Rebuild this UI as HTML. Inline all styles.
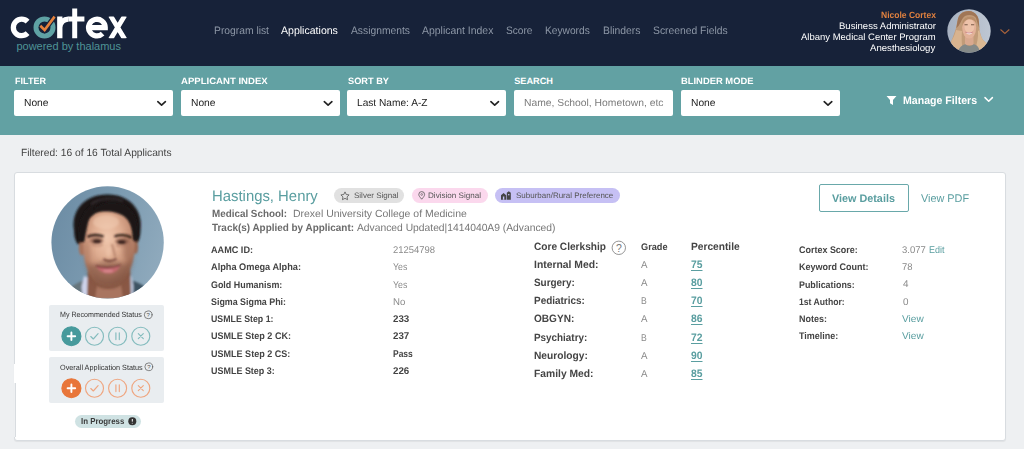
<!DOCTYPE html>
<html><head><meta charset="utf-8">
<style>
*{box-sizing:border-box;margin:0;padding:0}
html,body{width:1024px;height:449px;overflow:hidden}
body{font-family:"Liberation Sans",sans-serif;background:#eef0f2;position:relative}
.t{position:absolute;white-space:nowrap;transform-origin:0 50%;text-rendering:geometricPrecision}
.a{position:absolute}
.sel{position:absolute;top:90px;height:26px;width:159px;background:#fff;border-radius:2px}
.sb{position:absolute;left:48.5px;width:115px;height:46px;background:#e9edf0;border-radius:2px}
.pill{position:absolute;top:188px;height:15px;border-radius:7.5px}
</style></head><body>
<div class="a" style="left:0;top:0;width:1024px;height:66px;background:#172239"></div>
<div class="a" style="left:0;top:66px;width:1024px;height:68.5px;background:#62a1a3"></div>

<!-- logo -->
<svg class="a" style="left:0;top:0" width="140" height="66" viewBox="0 0 140 66">
  <defs><clipPath id="cx"><rect x="100" y="16.4" width="40" height="21.9"/></clipPath></defs><g fill="none" stroke="#fff" stroke-width="5.3">
    <path d="M27.6 21.6A8.3 8.3 0 1 0 27.6 33.2"/>
    <path d="M59.8 16.6V38.3M59.8 27.5a8.4 8.4 0 0 1 9-8.3"/>
    <path d="M74.7 8.6V38.3M68.8 18.9H84.4" stroke-width="5"/>
    <path d="M87.5 27.6H105.2A8.3 8.3 0 1 0 102.6 33.6" />
    <path d="M110.5 15.6L124.8 39.3M124.8 15.6L110.5 39.3" stroke-width="4.8" clip-path="url(#cx)"/>
  </g>
  <circle cx="44.5" cy="27.4" r="8.5" fill="none" stroke="#5fa2a4" stroke-width="5"/>
  <path d="M40.3 25.8L44.6 30 54.6 16.6" fill="none" stroke="#172239" stroke-width="5"/>
  <path d="M40.3 25.8L44.6 30 54.6 16.6" fill="none" stroke="#e5813c" stroke-width="2.6"/>
  <text x="16.4" y="50.3" font-family="Liberation Sans, sans-serif" font-size="10.5" fill="#4f9496" textLength="104.6" lengthAdjust="spacingAndGlyphs">powered by thalamus</text>
</svg>

<!-- nav avatar -->
<svg class="a" style="left:947px;top:8.5px" width="44" height="44" viewBox="0 0 44 44">
  <defs><clipPath id="ca"><circle cx="22" cy="22" r="21.7"/></clipPath>
  <linearGradient id="ab" x1="0" y1="0" x2="1" y2="0"><stop offset="0" stop-color="#a7b1c0"/><stop offset="1" stop-color="#bec7d3"/></linearGradient>
  <filter id="b1" x="-20%" y="-20%" width="140%" height="140%"><feGaussianBlur stdDeviation="0.7"/></filter></defs>
  <g clip-path="url(#ca)">
    <rect width="44" height="44" fill="url(#ab)"/>
    <g filter="url(#b1)">
      <path d="M22 2C15 2 11.500 6 10.700 11C9.500 16 9 20 7.700 23C6.500 27 5 30 4 33C5 37 7 39 8.500 41L34 41C36 39 38.500 36 39.600 34C37 32 35.500 31 34.800 29C33 25 32.800 22 32.400 19.600C32 14 32 10 30 7C28 3.500 25 2 22 2Z" fill="#c29c79"/>
      <path d="M22 2C15 2 11.500 6 10.700 11C10 14 9.800 17 9.300 19C13 17 14 10 18 7C22 5 27 6 29 9C30 12 31 16 32.300 19C32 13 32 9 30 6.500C28 3.500 25 2 22 2Z" fill="#a07657"/>
      <path d="M9 21C8 26 5.500 30 4 33C5.500 37 7.500 39.500 9 41L16 41C14.500 36 14.500 28 15 22Z" fill="#d8b38f"/>
      <path d="M31 22C31.500 28 30 35 28 41L34 41C36.500 38.500 38.500 36 39.600 34C36 31.500 35 30 34 27C33 25 32.800 23 32.500 21Z" fill="#dab893"/>
      <rect x="18" y="26" width="8.500" height="10" fill="#d9a98f"/>
      <ellipse cx="22.200" cy="18.600" rx="7" ry="11" fill="#e2b198"/>
      <ellipse cx="22.400" cy="17" rx="5" ry="7" fill="#edc2a9"/>
      <path d="M15.500 13C17 8 22 6.500 26 8C28 9 29 11 29.300 14C27 11 24 9.500 20.500 10.500C18 11.500 16.500 13.500 15.300 17Z" fill="#b88e6a"/>
      <path d="M10.500 44C11.500 38.500 15.500 35.800 18.500 35.200C21 37.500 24 37.500 26.500 35.200C30 35.800 32.500 38.500 33 44Z" fill="#858a88"/>
      <path d="M17.500 15.800h3.200M24 15.800h3.200" stroke="#7a5a4a" stroke-width="1.100"/>
      <path d="M18.600 23.300C20.500 26.200 24 26.200 25.500 23.300Z" fill="#f7ece8"/>
      <path d="M18.300 23.200C20.500 24.200 23.500 24.200 25.800 23.100" stroke="#c7757a" stroke-width=".8" fill="none"/>
    </g>
  </g>
</svg>
<svg class="a" style="left:999px;top:27.5px" width="12" height="8"><path d="M1.5 1.5l4.4 4 4.4-4" fill="none" stroke="#a9633b" stroke-width="1.1"/></svg>

<!-- selects -->
<div class="sel" style="left:14.3px"></div>
<div class="sel" style="left:180.8px"></div>
<div class="sel" style="left:347.3px"></div>
<div class="sel" style="left:514px"></div>
<div class="sel" style="left:680.8px"></div>
<svg class="a" style="left:0;top:96px" width="1024" height="14" fill="none" stroke="#222" stroke-width="1.7" stroke-linecap="round" stroke-linejoin="round">
  <path d="M157.800 5.700l3.800 3.400 3.800-3.400"/><path d="M324.300 5.700l3.800 3.400 3.800-3.400"/><path d="M490.900 5.700l3.800 3.400 3.800-3.400"/><path d="M824.200 5.700l3.800 3.400 3.800-3.400"/>
  <path d="M985 1.6l3.7 3.6 3.7-3.6" stroke="#fff" stroke-width="1.5"/>
  <path d="M885.300 -1.400h12.400l-4.700 5.300v5l-3-1.700v-3.300z" fill="#fff" stroke="none"/>
</svg>

<!-- card -->
<div class="a" style="left:14px;top:171.5px;width:992px;height:269px;background:#fff;border:1px solid #d8dce0;border-radius:3px;box-shadow:0 1px 1px rgba(0,0,0,.06)"></div>

<div class="a" style="left:14px;top:363.5px;width:1.6px;height:19.5px;background:#fff"></div>
<div class="a" style="left:14px;top:383px;width:1.8px;height:54px;background:linear-gradient(to right,#eef0f2 0,#eef0f2 .7px,#d8dce0 .7px,#d8dce0 1.8px)"></div>
<!-- photo -->
<svg class="a" style="left:50.5px;top:185.5px" width="113" height="113" viewBox="0 0 113 113">
  <defs><clipPath id="cp"><circle cx="56.6" cy="56.4" r="56.2"/></clipPath>
  <linearGradient id="bg" x1="0" y1="0.2" x2="1" y2="0.5"><stop offset="0" stop-color="#6c8ca4"/><stop offset=".5" stop-color="#7b9ab0"/><stop offset="1" stop-color="#8ea9bc"/></linearGradient>
  <radialGradient id="fc" cx=".46" cy=".36" r=".62"><stop offset="0" stop-color="#f1c9af"/><stop offset=".45" stop-color="#dfad91"/><stop offset=".8" stop-color="#c08a70"/><stop offset="1" stop-color="#96644e"/></radialGradient>
  <filter id="b2" x="-20%" y="-20%" width="140%" height="140%"><feGaussianBlur stdDeviation="1.3"/></filter>
  <filter id="b3" x="-20%" y="-20%" width="140%" height="140%"><feGaussianBlur stdDeviation="0.8"/></filter>
  <filter id="b4" x="-30%" y="-30%" width="160%" height="160%"><feGaussianBlur stdDeviation="2.4"/></filter></defs>
  <g clip-path="url(#cp)">
    <rect width="113" height="113" fill="url(#bg)"/>
    <g filter="url(#b2)">
      <!-- jacket -->
      <path d="M14 106C20 100 26 97 32 94.500L38 113H10Z" fill="#66747b"/>
      <path d="M98 104C93 99 87 96.500 81.500 94.500L76 113H102Z" fill="#3e5262"/>
      <!-- collar -->
      <path d="M30.500 101L33 90 38 92 42 113H32Z" fill="#cdd3ea"/>
      <path d="M82.500 100L80.500 90 77 92 73 113H82Z" fill="#bcc8de"/>
      <!-- neck -->
      <path d="M37 80H79L80 113H36Z" fill="#8a5944"/>
      <path d="M46 100C52 104 64 104 70 99L72 113H44Z" fill="#a97560"/>
      <!-- hair mass -->
      <path d="M23 44C20 24 34 8.500 56 8.500C78 8 92.500 24 89.500 44C89.500 50 88 54 86.500 57L81 58 80 48 34 48 32 60 26.500 58C24 54 23 50 23 44Z" fill="#1b1718"/>
      <!-- ears -->
      <ellipse cx="31" cy="62" rx="3.200" ry="7.500" fill="#a9735c"/>
      <ellipse cx="84.500" cy="61" rx="2.600" ry="7" fill="#9a6751"/>
      <!-- face -->
      <path d="M32.500 50C33 38 38 30 47 25.500C54 23.500 64 23.800 70 26C78 30 82 40 82.500 50C84.500 58 84 66 82.500 72C80.500 82 76 91 70.500 96C66 99.500 62 100.500 58 100.500C53 100.500 49 99 46 97C40 92 36 84 34 76C32.500 68 32 58 32.500 50Z" fill="url(#fc)"/>
    </g>
    <g filter="url(#b4)">
      <!-- stubble -->
      <path d="M35 74C40 82 46 78 50 76C54 75 64 75 68 76C72 78 77 80 82 70C80 84 75 93 69 97.500C63 101 53 101 47 97.500C40 93 36 84 35 74Z" fill="#6f4636" opacity=".5"/>
      <ellipse cx="77" cy="62" rx="5" ry="14" fill="#8d5a46" opacity=".45"/>
      <ellipse cx="36" cy="66" rx="3" ry="12" fill="#9a6650" opacity=".35"/>
    </g>
    <g filter="url(#b2)">
      <!-- hair front -->
      <path d="M28 56C26 38 32 22 46 16C42 24 38.500 30 37 36C36 42 34.500 48 33 56Z" fill="#1b1718"/>
      <path d="M38 32C42 18 60 12 76 20C86 28 88 42 86 56L82 54C82 44 80 36 74 31C66 25 52 24 44 27Z" fill="#1b1718"/>
      <path d="M40 18C48 12 62 11 72 15" stroke="#3a3436" stroke-width="2" fill="none" opacity=".7"/>
    </g>
    <g filter="url(#b3)">
      <path d="M36.500 51C40 48.500 47 48.300 52.500 50.500" stroke="#2e1d18" stroke-width="2.300" fill="none"/>
      <path d="M63.500 50.500C69 48.300 76 48.800 80.500 51.800" stroke="#2e1d18" stroke-width="2.300" fill="none"/>
      <ellipse cx="45.500" cy="54.500" rx="7" ry="3.600" fill="#7d4f3f" opacity=".55"/><ellipse cx="71" cy="55.300" rx="7" ry="3.600" fill="#7d4f3f" opacity=".55"/><ellipse cx="46" cy="55.200" rx="4.200" ry="2" fill="#3c2620"/>
      <ellipse cx="70.700" cy="56" rx="4.200" ry="2" fill="#3c2620"/>
      <path d="M40.500 58.500C44 60.500 49 60.500 52 58.500" stroke="#a8705c" stroke-width="1.200" fill="none" opacity=".7"/>
      <path d="M65 59C68 61 73 61 76.500 59" stroke="#a8705c" stroke-width="1.200" fill="none" opacity=".7"/>
      <path d="M61 58C62.500 64 63.500 68 64.500 71" stroke="#a06a55" stroke-width="2.500" fill="none" opacity=".5"/>
      <path d="M52.500 73C55 75.800 62 75.800 65.500 72.500" stroke="#6e3e32" stroke-width="2.200" fill="none" opacity=".85"/>
      <ellipse cx="57.500" cy="66" rx="2.500" ry="5" fill="#f2cbb2" opacity=".45"/>
      <path d="M45.500 80.200C52 82.500 62 82.500 69 79.500C67 86 61 88 56.500 87.500C51 87 47 84 45.500 80.200Z" fill="#c2696e"/>
      <path d="M44.800 79.800C52 82.200 62 82.200 69.500 79" stroke="#6a2f2f" stroke-width="1.300" fill="none"/>
      <ellipse cx="57" cy="85" rx="5" ry="1.500" fill="#dd8f95" opacity=".8"/>
      <ellipse cx="55" cy="36" rx="13" ry="7" fill="#f5d0b8" opacity=".45"/>
    </g>
  </g>
</svg>

<!-- status boxes -->
<div class="sb" style="top:304.5px"></div>
<div class="sb" style="top:356.5px"></div>
<svg class="a" style="left:48px;top:304px" width="116" height="100" fill="none" stroke-linecap="round" stroke-linejoin="round">
  <g stroke="#555" stroke-width=".7"><circle cx="100.2" cy="10.8" r="3.9"/><circle cx="100.8" cy="62.8" r="3.9"/></g>
  <g font-family="Liberation Sans, sans-serif" font-size="6" fill="#555" stroke="none" text-anchor="middle"><text x="100.2" y="13">?</text><text x="100.8" y="65">?</text></g>
  <g stroke="#84bcbe" stroke-width="1.150">
    <circle cx="23.4" cy="32.2" r="9.5" fill="#479a9c" stroke="#479a9c"/>
    <circle cx="46.5" cy="32.2" r="9"/><circle cx="69.6" cy="32.2" r="9"/><circle cx="92.8" cy="32.2" r="9"/>
    <path d="M19.6 32.2h7.6M23.4 28.4v7.6" stroke="#fff" stroke-width="1.9"/>
    <path d="M42.800 32.500l2.500 2.500 4.800-5.300"/><path d="M67.900 28.800v6.800M71.300 28.800v6.800"/><path d="M90.300 29.700l5 5M95.300 29.700l-5 5"/>
  </g>
  <g stroke="#efa680" stroke-width="1.150" transform="translate(0 52)">
    <circle cx="23.4" cy="32.2" r="9.5" fill="#e8763a" stroke="#e8763a"/>
    <circle cx="46.5" cy="32.2" r="9"/><circle cx="69.6" cy="32.2" r="9"/><circle cx="92.8" cy="32.2" r="9"/>
    <path d="M19.6 32.2h7.6M23.4 28.4v7.6" stroke="#fff" stroke-width="1.9"/>
    <path d="M42.800 32.500l2.500 2.500 4.800-5.300"/><path d="M67.900 28.800v6.800M71.300 28.800v6.800"/><path d="M90.300 29.700l5 5M95.300 29.700l-5 5"/>
  </g>
</svg>
<div class="a" style="left:75.3px;top:414.5px;width:65.3px;height:13px;border-radius:6.5px;background:#cfe2e3"></div>
<svg class="a" style="left:127.5px;top:416.8px" width="9" height="9"><circle cx="4.3" cy="4.2" r="4" fill="#333"/><path d="M4.3 2v2.6M4.3 5.9v.6" stroke="#fff" stroke-width="1"/></svg>

<!-- pills -->
<div class="pill" style="left:334.2px;width:70.3px;background:#e1e1e1"></div>
<div class="pill" style="left:411.7px;width:76px;background:#fbd8ed"></div>
<div class="pill" style="left:494.5px;width:125.2px;background:#c6c0f4"></div>
<svg class="a" style="left:340px;top:190.5px" width="10" height="10" viewBox="0 0 10 10"><path d="M5 .9l1.25 2.6 2.85.4-2.05 2 .5 2.8L5 7.35 2.45 8.7l.5-2.8-2.05-2 2.85-.4z" fill="none" stroke="#555" stroke-width=".8" stroke-linejoin="round"/></svg>
<svg class="a" style="left:417.6px;top:191px" width="8" height="9" viewBox="0 0 8 9"><path d="M3.7 8.2C1.8 5.9.8 4.8.8 3.5a2.9 2.9 0 0 1 5.8 0C6.600 4.8 5.600 5.900 3.700 8.200z" fill="none" stroke="#555" stroke-width=".8"/><circle cx="3.7" cy="3.5" r=".9" fill="none" stroke="#555" stroke-width=".6"/></svg>
<svg class="a" style="left:501px;top:190.5px" width="11" height="9" viewBox="0 0 11 9"><path d="M0 8.700V4.200L2.600 2 5.200 4.200V8.700zM5.800 8.700V1.800L7.800.3 9.800 1.800V8.700z" fill="#444"/><rect x="1.900" y="5.500" width="1.400" height="3.200" fill="#c6c0f4"/><rect x="7.100" y="3" width="1.300" height="1.300" fill="#c6c0f4"/></svg>

<!-- buttons -->
<div class="a" style="left:818.8px;top:184px;width:90px;height:28px;border:1px solid #69a8aa;border-radius:2px;background:#fff"></div>
<!-- core clerkship ? -->
<svg class="a" style="left:610.5px;top:239.5px" width="16" height="16"><circle cx="7.8" cy="7.800" r="6.7" fill="none" stroke="#888" stroke-width=".9"/><text x="7.800" y="11.500" font-family="Liberation Sans, sans-serif" font-size="10.500" fill="#777" text-anchor="middle">?</text></svg>

<span class="t" style="left:214.2px;top:24px;font-size:10.8px;line-height:14px;font-weight:normal;color:#8d97a6;transform:scaleX(0.9547);">Program list</span>
<span class="t" style="left:281.2px;top:24px;font-size:10.8px;line-height:14px;font-weight:normal;color:#fff;transform:scaleX(0.9773);">Applications</span>
<span class="t" style="left:350.7px;top:24px;font-size:10.8px;line-height:14px;font-weight:normal;color:#8d97a6;transform:scaleX(0.9545);">Assignments</span>
<span class="t" style="left:422.3px;top:24px;font-size:10.8px;line-height:14px;font-weight:normal;color:#8d97a6;transform:scaleX(0.9671);">Applicant Index</span>
<span class="t" style="left:506.0px;top:24px;font-size:10.8px;line-height:14px;font-weight:normal;color:#8d97a6;transform:scaleX(0.9391);">Score</span>
<span class="t" style="left:545.4px;top:24px;font-size:10.8px;line-height:14px;font-weight:normal;color:#8d97a6;transform:scaleX(0.9450);">Keywords</span>
<span class="t" style="left:602.8px;top:24px;font-size:10.8px;line-height:14px;font-weight:normal;color:#8d97a6;transform:scaleX(0.9586);">Blinders</span>
<span class="t" style="left:652.8px;top:24px;font-size:10.8px;line-height:14px;font-weight:normal;color:#8d97a6;transform:scaleX(0.9573);">Screened Fields</span>
<span class="t" style="left:880.7px;top:9px;font-size:9px;line-height:12px;font-weight:bold;color:#e0813f;transform:scaleX(0.9460);">Nicole Cortex</span>
<span class="t" style="left:838.7px;top:20px;font-size:9.4px;line-height:12px;font-weight:normal;color:#fff;transform:scaleX(1.0162);">Business Administrator</span>
<span class="t" style="left:801.0px;top:31px;font-size:9.4px;line-height:12px;font-weight:normal;color:#fff;transform:scaleX(1.0130);">Albany Medical Center Program</span>
<span class="t" style="left:870.4px;top:42px;font-size:9.4px;line-height:12px;font-weight:normal;color:#fff;transform:scaleX(1.0253);">Anesthesiology</span>
<span class="t" style="left:14.5px;top:75px;font-size:9.2px;line-height:12px;font-weight:bold;color:#fff;transform:scaleX(0.9846);">FILTER</span>
<span class="t" style="left:181.0px;top:75px;font-size:9.2px;line-height:12px;font-weight:bold;color:#fff;transform:scaleX(1.0418);">APPLICANT INDEX</span>
<span class="t" style="left:347.7px;top:75px;font-size:9.2px;line-height:12px;font-weight:bold;color:#fff;transform:scaleX(1.0038);">SORT BY</span>
<span class="t" style="left:514.2px;top:75px;font-size:9.2px;line-height:12px;font-weight:bold;color:#fff;">SEARCH</span>
<span class="t" style="left:681.0px;top:75px;font-size:9.2px;line-height:12px;font-weight:bold;color:#fff;transform:scaleX(1.0218);">BLINDER MODE</span>
<span class="t" style="left:23.7px;top:97px;font-size:10.2px;line-height:13px;font-weight:normal;color:#222;transform:scaleX(1.0058);">None</span>
<span class="t" style="left:190.5px;top:97px;font-size:10.2px;line-height:13px;font-weight:normal;color:#222;transform:scaleX(1.0058);">None</span>
<span class="t" style="left:356.7px;top:97px;font-size:10.2px;line-height:13px;font-weight:normal;color:#222;transform:scaleX(0.9960);">Last Name: A-Z</span>
<span class="t" style="left:523.7px;top:97px;font-size:10.2px;line-height:13px;font-weight:normal;color:#7b7b7b;transform:scaleX(1.0139);">Name, School, Hometown, etc</span>
<span class="t" style="left:690.5px;top:97px;font-size:10.2px;line-height:13px;font-weight:normal;color:#222;transform:scaleX(1.0058);">None</span>
<span class="t" style="left:903.1px;top:94px;font-size:11px;line-height:14px;font-weight:bold;color:#fff;transform:scaleX(0.9619);">Manage Filters</span>
<span class="t" style="left:20.5px;top:147px;font-size:10.4px;line-height:14px;font-weight:normal;color:#444;transform:scaleX(0.9845);">Filtered: 16 of 16 Total Applicants</span>
<span class="t" style="left:211.7px;top:187px;font-size:15.2px;line-height:20px;font-weight:normal;color:#5a9ea0;transform:scaleX(0.9792);">Hastings, Henry</span>
<span class="t" style="left:353.7px;top:191px;font-size:7.9px;line-height:10px;font-weight:normal;color:#555;transform:scaleX(1.0146);">Silver Signal</span>
<span class="t" style="left:428.2px;top:191px;font-size:7.9px;line-height:10px;font-weight:normal;color:#555;transform:scaleX(1.0238);">Division Signal</span>
<span class="t" style="left:515.7px;top:191px;font-size:7.9px;line-height:10px;font-weight:normal;color:#555;transform:scaleX(1.0129);">Suburban/Rural Preference</span>
<span class="t" style="left:211.7px;top:208px;font-size:10.4px;line-height:14px;font-weight:bold;color:#6a6a6a;transform:scaleX(0.9481);">Medical School:</span>
<span class="t" style="left:292.7px;top:208px;font-size:10.4px;line-height:14px;font-weight:normal;color:#777;transform:scaleX(1.0065);">Drexel University College of Medicine</span>
<span class="t" style="left:211.7px;top:222px;font-size:10.4px;line-height:14px;font-weight:bold;color:#6a6a6a;transform:scaleX(0.9545);">Track(s) Applied by Applicant:</span>
<span class="t" style="left:357.0px;top:222px;font-size:10.4px;line-height:14px;font-weight:normal;color:#777;transform:scaleX(0.9911);">Advanced Updated|1414040A9 (Advanced)</span>
<span class="t" style="left:832.4px;top:192px;font-size:11px;line-height:14px;font-weight:bold;color:#5a9ea0;transform:scaleX(0.9828);">View Details</span>
<span class="t" style="left:921.3px;top:192px;font-size:11.2px;line-height:15px;font-weight:normal;color:#5a9ea0;transform:scaleX(0.9711);">View PDF</span>
<span class="t" style="left:211.2px;top:245px;font-size:9.6px;line-height:12px;font-weight:bold;color:#444;transform:scaleX(0.9495);">AAMC ID:</span>
<span class="t" style="left:393.2px;top:244px;font-size:9.8px;line-height:13px;font-weight:normal;color:#8a8a8a;transform:scaleX(0.9634);">21254798</span>
<span class="t" style="left:211.2px;top:262px;font-size:9.6px;line-height:12px;font-weight:bold;color:#444;transform:scaleX(0.9574);">Alpha Omega Alpha:</span>
<span class="t" style="left:393.2px;top:261px;font-size:9.8px;line-height:13px;font-weight:normal;color:#8a8a8a;transform:scaleX(0.8946);">Yes</span>
<span class="t" style="left:211.2px;top:280px;font-size:9.6px;line-height:12px;font-weight:bold;color:#444;transform:scaleX(0.9288);">Gold Humanism:</span>
<span class="t" style="left:393.2px;top:279px;font-size:9.8px;line-height:13px;font-weight:normal;color:#8a8a8a;transform:scaleX(0.8946);">Yes</span>
<span class="t" style="left:211.2px;top:297px;font-size:9.6px;line-height:12px;font-weight:bold;color:#444;transform:scaleX(0.9254);">Sigma Sigma Phi:</span>
<span class="t" style="left:393.2px;top:296px;font-size:9.8px;line-height:13px;font-weight:normal;color:#8a8a8a;transform:scaleX(0.9815);">No</span>
<span class="t" style="left:211.2px;top:314px;font-size:9.6px;line-height:12px;font-weight:bold;color:#444;transform:scaleX(0.9160);">USMLE Step 1:</span>
<span class="t" style="left:393.2px;top:313px;font-size:9.8px;line-height:13px;font-weight:bold;color:#444;transform:scaleX(0.9964);">233</span>
<span class="t" style="left:211.2px;top:331px;font-size:9.6px;line-height:12px;font-weight:bold;color:#444;transform:scaleX(0.9438);">USMLE Step 2 CK:</span>
<span class="t" style="left:393.2px;top:330px;font-size:9.8px;line-height:13px;font-weight:bold;color:#444;transform:scaleX(0.9964);">237</span>
<span class="t" style="left:211.2px;top:349px;font-size:9.6px;line-height:12px;font-weight:bold;color:#444;transform:scaleX(0.9414);">USMLE Step 2 CS:</span>
<span class="t" style="left:393.2px;top:348px;font-size:9.8px;line-height:13px;font-weight:bold;color:#444;transform:scaleX(0.8650);">Pass</span>
<span class="t" style="left:211.2px;top:366px;font-size:9.6px;line-height:12px;font-weight:bold;color:#444;transform:scaleX(0.9350);">USMLE Step 3:</span>
<span class="t" style="left:393.2px;top:365px;font-size:9.8px;line-height:13px;font-weight:bold;color:#444;transform:scaleX(0.9964);">226</span>
<span class="t" style="left:534.2px;top:240px;font-size:10.6px;line-height:14px;font-weight:bold;color:#444;transform:scaleX(0.9554);">Core Clerkship</span>
<span class="t" style="left:640.5px;top:242px;font-size:9.6px;line-height:12px;font-weight:bold;color:#444;transform:scaleX(0.9555);">Grade</span>
<span class="t" style="left:690.5px;top:240px;font-size:10.6px;line-height:14px;font-weight:bold;color:#444;transform:scaleX(0.9614);">Percentile</span>
<span class="t" style="left:534.2px;top:258px;font-size:10.6px;line-height:14px;font-weight:bold;color:#444;transform:scaleX(0.9784);">Internal Med:</span>
<span class="t" style="left:640.5px;top:259px;font-size:9.8px;line-height:13px;font-weight:normal;color:#8a8a8a;transform:scaleX(0.9928);">A</span>
<span class="t" style="left:690.5px;top:258px;font-size:10.8px;line-height:14px;font-weight:bold;color:#5a9ea0;transform:scaleX(0.9571);text-decoration:underline;text-underline-offset:1.5px;text-decoration-thickness:1px;">75</span>
<span class="t" style="left:534.2px;top:276px;font-size:10.6px;line-height:14px;font-weight:bold;color:#444;transform:scaleX(0.9362);">Surgery:</span>
<span class="t" style="left:640.5px;top:277px;font-size:9.8px;line-height:13px;font-weight:normal;color:#8a8a8a;transform:scaleX(0.9928);">A</span>
<span class="t" style="left:690.5px;top:276px;font-size:10.8px;line-height:14px;font-weight:bold;color:#5a9ea0;transform:scaleX(0.9571);text-decoration:underline;text-underline-offset:1.5px;text-decoration-thickness:1px;">80</span>
<span class="t" style="left:534.2px;top:294px;font-size:10.6px;line-height:14px;font-weight:bold;color:#444;transform:scaleX(0.9378);">Pediatrics:</span>
<span class="t" style="left:640.5px;top:295px;font-size:9.8px;line-height:13px;font-weight:normal;color:#8a8a8a;transform:scaleX(0.8859);">B</span>
<span class="t" style="left:690.5px;top:294px;font-size:10.8px;line-height:14px;font-weight:bold;color:#5a9ea0;transform:scaleX(0.9571);text-decoration:underline;text-underline-offset:1.5px;text-decoration-thickness:1px;">70</span>
<span class="t" style="left:534.2px;top:312px;font-size:10.6px;line-height:14px;font-weight:bold;color:#444;transform:scaleX(0.9510);">OBGYN:</span>
<span class="t" style="left:640.5px;top:313px;font-size:9.8px;line-height:13px;font-weight:normal;color:#8a8a8a;transform:scaleX(0.9928);">A</span>
<span class="t" style="left:690.5px;top:312px;font-size:10.8px;line-height:14px;font-weight:bold;color:#5a9ea0;transform:scaleX(0.9571);text-decoration:underline;text-underline-offset:1.5px;text-decoration-thickness:1px;">86</span>
<span class="t" style="left:534.2px;top:331px;font-size:10.6px;line-height:14px;font-weight:bold;color:#444;transform:scaleX(0.9330);">Psychiatry:</span>
<span class="t" style="left:640.5px;top:332px;font-size:9.8px;line-height:13px;font-weight:normal;color:#8a8a8a;transform:scaleX(0.8859);">B</span>
<span class="t" style="left:690.5px;top:331px;font-size:10.8px;line-height:14px;font-weight:bold;color:#5a9ea0;transform:scaleX(0.9571);text-decoration:underline;text-underline-offset:1.5px;text-decoration-thickness:1px;">72</span>
<span class="t" style="left:534.2px;top:349px;font-size:10.6px;line-height:14px;font-weight:bold;color:#444;transform:scaleX(0.9621);">Neurology:</span>
<span class="t" style="left:640.5px;top:350px;font-size:9.8px;line-height:13px;font-weight:normal;color:#8a8a8a;transform:scaleX(0.9928);">A</span>
<span class="t" style="left:690.5px;top:349px;font-size:10.8px;line-height:14px;font-weight:bold;color:#5a9ea0;transform:scaleX(0.9571);text-decoration:underline;text-underline-offset:1.5px;text-decoration-thickness:1px;">90</span>
<span class="t" style="left:534.2px;top:367px;font-size:10.6px;line-height:14px;font-weight:bold;color:#444;transform:scaleX(0.9717);">Family Med:</span>
<span class="t" style="left:640.5px;top:368px;font-size:9.8px;line-height:13px;font-weight:normal;color:#8a8a8a;transform:scaleX(0.9928);">A</span>
<span class="t" style="left:690.5px;top:367px;font-size:10.8px;line-height:14px;font-weight:bold;color:#5a9ea0;transform:scaleX(0.9571);text-decoration:underline;text-underline-offset:1.5px;text-decoration-thickness:1px;">85</span>
<span class="t" style="left:798.6px;top:245px;font-size:9.6px;line-height:12px;font-weight:bold;color:#444;transform:scaleX(0.9345);">Cortex Score:</span>
<span class="t" style="left:798.6px;top:262px;font-size:9.6px;line-height:12px;font-weight:bold;color:#444;transform:scaleX(0.9394);">Keyword Count:</span>
<span class="t" style="left:798.6px;top:280px;font-size:9.6px;line-height:12px;font-weight:bold;color:#444;transform:scaleX(0.9247);">Publications:</span>
<span class="t" style="left:798.6px;top:297px;font-size:9.6px;line-height:12px;font-weight:bold;color:#444;transform:scaleX(0.8994);">1st Author:</span>
<span class="t" style="left:798.6px;top:314px;font-size:9.6px;line-height:12px;font-weight:bold;color:#444;transform:scaleX(0.9344);">Notes:</span>
<span class="t" style="left:798.6px;top:331px;font-size:9.6px;line-height:12px;font-weight:bold;color:#444;transform:scaleX(0.9368);">Timeline:</span>
<span class="t" style="left:902.0px;top:244px;font-size:9.8px;line-height:13px;font-weight:normal;color:#8a8a8a;transform:scaleX(0.9702);">3.077</span>
<span class="t" style="left:928.9px;top:244px;font-size:9.8px;line-height:13px;font-weight:normal;color:#5a9ea0;transform:scaleX(0.9177);">Edit</span>
<span class="t" style="left:902.0px;top:261px;font-size:9.8px;line-height:13px;font-weight:normal;color:#8a8a8a;transform:scaleX(0.9628);">78</span>
<span class="t" style="left:903.4px;top:278px;font-size:9.8px;line-height:13px;font-weight:normal;color:#8a8a8a;transform:scaleX(1.0086);">4</span>
<span class="t" style="left:902.5px;top:296px;font-size:9.8px;line-height:13px;font-weight:normal;color:#8a8a8a;transform:scaleX(1.0086);">0</span>
<span class="t" style="left:902.0px;top:313px;font-size:9.8px;line-height:13px;font-weight:normal;color:#5a9ea0;transform:scaleX(1.0303);">View</span>
<span class="t" style="left:902.0px;top:330px;font-size:9.8px;line-height:13px;font-weight:normal;color:#5a9ea0;transform:scaleX(1.0303);">View</span>
<span class="t" style="left:60.0px;top:310px;font-size:7.6px;line-height:10px;font-weight:normal;color:#333;transform:scaleX(0.9351);">My Recommended Status</span>
<span class="t" style="left:59.6px;top:363px;font-size:7.6px;line-height:10px;font-weight:normal;color:#333;transform:scaleX(0.9557);">Overall Application Status</span>
<span class="t" style="left:81.0px;top:416px;font-size:8.6px;line-height:11px;font-weight:bold;color:#3a3a3a;transform:scaleX(0.9155);">In Progress</span>
</body></html>
